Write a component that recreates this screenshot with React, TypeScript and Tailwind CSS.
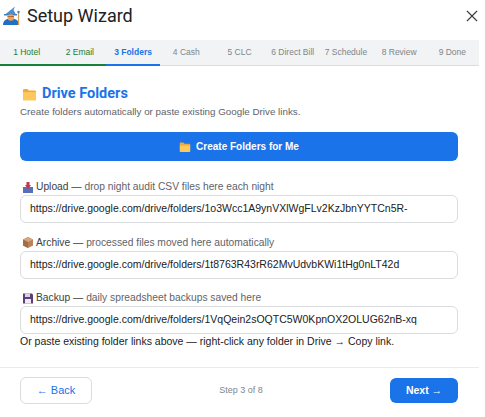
const tabs = ['1 Hotel', '2 Email', '3 Folders', '4 Cash', '5 CLC', '6 Direct Bill', '7 Schedule', '8 Review', '9 Done'];

function WizardIcon() {
  return (
    <svg width="18" height="20" viewBox="0 0 18 20" className="shrink-0">
      <path d="M0 20c0-4 2.500-6.500 8-6.500s8 2.500 8 6.500z" fill="#1f6fc4" />
      <path d="M2 9.500 12 1.500 10.500 5 13 9.500z" fill="#4a90cf" />
      <path d="M1 9h13v1.500H1z" fill="#3a7fc0" />
      <circle cx="7.800" cy="12.500" r="3.300" fill="#f3a15c" />
      <path d="M4.500 11h6.500v1H4.500z" fill="#b8672f" />
      <path d="M15.500 8v12" stroke="#d99a4e" strokeWidth="1.200" />
      <circle cx="15.500" cy="7" r="1.200" fill="#3f7fbf" />
    </svg>
  );
}

function FolderIcon({ size = 15 }: { size?: number }) {
  return (
    <svg width={size} height={size} viewBox="0 0 16 16" className="shrink-0">
      <path d="M1 3.500C1 2.700 1.600 2 2.400 2h3.400l1.600 1.800h6.200c.8 0 1.400.6 1.400 1.400V6H1z" fill="#f2a93b" />
      <path d="M1 5.500h14v7.700c0 .8-.6 1.300-1.400 1.300H2.400c-.8 0-1.400-.5-1.400-1.300z" fill="#fdc95c" />
    </svg>
  );
}

function UploadIcon() {
  return (
    <svg width="10" height="11" viewBox="0 0 10 11" className="shrink-0">
      <path d="M0 5h10v6H0z" fill="#5a6fb5" />
      <path d="M3.500 0h3v3H8L5 7 2 3h1.500z" fill="#c8344a" />
    </svg>
  );
}

function BoxIcon() {
  return (
    <svg width="10" height="11" viewBox="0 0 10 11" className="shrink-0">
      <path d="M5 0l5 2.500v6L5 11 0 8.500v-6z" fill="#b9825a" />
      <path d="M5 0l5 2.500L5 5 0 2.500z" fill="#d6a67c" />
      <path d="M5 5v6L0 8.500v-6z" fill="#a26d47" />
    </svg>
  );
}

function SaveIcon() {
  return (
    <svg width="10" height="11" viewBox="0 0 10 11" className="shrink-0">
      <path d="M0 .5h9l1 1v9H0z" fill="#5c3f78" />
      <path d="M2 .5h5v3.500H2z" fill="#d8d3de" />
      <path d="M2 6h6v4.500H2z" fill="#efe9f3" />
    </svg>
  );
}

function FolderField({ icon, name, hint, value }: { icon: React.ReactNode; name: string; hint: string; value: string }) {
  return (
    <div>
      <div className="flex items-center gap-[3px] h-[14px] mb-[1px] pl-[3px] text-[10.25px]">
        {icon}
        <span className="text-[#3c4043] whitespace-nowrap">
          {name} — <span className="text-[#5f6368]">{hint}</span>
        </span>
      </div>
      <div className="h-[28px] flex items-center px-[9px] bg-white border border-[#dadce0] rounded-md text-[10.5px] text-[#202124] whitespace-nowrap overflow-hidden">
        {value}
      </div>
    </div>
  );
}

export default function App() {
  return (
    <div className="w-[485px] h-[417px] bg-white overflow-hidden font-['Liberation_Sans',Arial,sans-serif]">
      <div className="w-[479px] h-[417px] flex flex-col">
        {/* Header */}
        <div className="h-[40px] flex items-start justify-between pt-[5px] pl-[3px] pr-[1px]">
          <div className="flex items-center gap-[6px]">
            <WizardIcon />
            <span className="text-[18px] text-[#202124] font-['Roboto',sans-serif] leading-none pt-[2px]">Setup Wizard</span>
          </div>
          <svg width="12" height="12" viewBox="0 0 12 12" fill="none" stroke="#3c4043" strokeWidth="1.200" className="mt-[5px]">
            <path d="M1 1l10 10M11 1 1 11" />
          </svg>
        </div>

        {/* Steps */}
        <div className="h-[26px] flex bg-[#f1f3f4] border-b border-[#dadce0]">
          {tabs.map((t, i) => (
            <div
              key={t}
              className={`flex-1 flex items-center justify-center pt-[1px] whitespace-nowrap text-[8.5px] border-b-2 mb-[-1px] ${
                i < 2 ? 'border-[#188038] text-[#188038]' : i === 2 ? 'border-[#1a73e8] text-[#1a73e8] font-semibold' : 'border-transparent text-[#80868b]'
              }`}
            >
              {t}
            </div>
          ))}
        </div>

        {/* Body */}
        <div className="flex-1 pt-[19px] pl-[20px] pr-[21px]">
          <div className="flex items-center gap-[5px] h-[18px] pl-[2px]">
            <FolderIcon size={15} />
            <span className="text-[14.5px] font-bold text-[#1a73e8] font-['Roboto',sans-serif]">Drive Folders</span>
          </div>
          <p className="mt-[2px] text-[9.8px] leading-[14px] text-[#5f6368]">Create folders automatically or paste existing Google Drive links.</p>
          <button className="mt-[13px] w-full h-[29px] flex items-center justify-center gap-[5px] bg-[#1a73e8] rounded-md text-white text-[10px] font-semibold">
            <FolderIcon size={12} />
            Create Folders for Me
          </button>
          <div className="mt-[19px] flex flex-col gap-[12.5px]">
            <FolderField icon={<UploadIcon />} name="Upload" hint="drop night audit CSV files here each night" value="https://drive.google.com/drive/folders/1o3Wcc1A9ynVXlWgFLv2KzJbnYYTCn5R-" />
            <FolderField icon={<BoxIcon />} name="Archive" hint="processed files moved here automatically" value="https://drive.google.com/drive/folders/1t8763R43rR62MvUdvbKWi1tHg0nLT42d" />
            <FolderField icon={<SaveIcon />} name="Backup" hint="daily spreadsheet backups saved here" value="https://drive.google.com/drive/folders/1VqQein2sOQTC5W0KpnOX2OLUG62nB-xq" />
          </div>
          <p className="text-[10.5px] leading-[14px] text-[#202124]">Or paste existing folder links above — right-click any folder in Drive → Copy link.</p>
        </div>

        {/* Footer */}
        <div className="h-[50px] border-t border-[#e8eaed] flex items-start justify-between pt-[9px] pl-[20px] pr-[21px]">
          <button className="w-[72px] h-[27px] border border-[#dadce0] rounded-md text-[#1a73e8] text-[11px] bg-white">← Back</button>
          <span className="mt-[7px] text-[9px] text-[#80868b]">Step 3 of 8</span>
          <button className="w-[68px] h-[25px] mt-[1px] bg-[#1a73e8] rounded-md text-white text-[10.5px] font-semibold">Next →</button>
        </div>
      </div>
    </div>
  );
}
